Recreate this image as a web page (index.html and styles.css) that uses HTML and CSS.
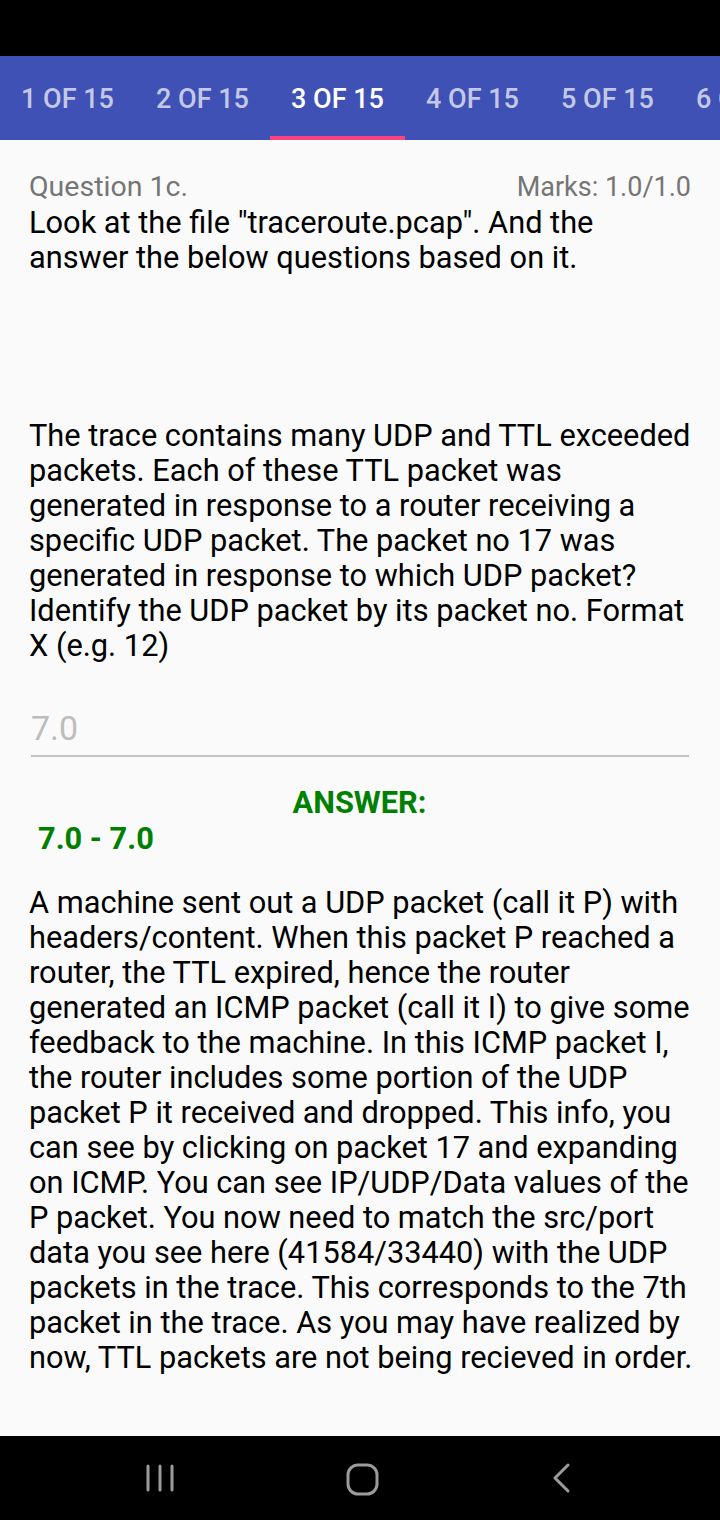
FILE: index.html
```html
<!DOCTYPE html>
<html>
<head>
<meta charset="utf-8">
<link rel="stylesheet" href="styles.css">
</head>
<body>
<div class="screen">
  <div class="statusbar"></div>
  <div class="tabs">
    <div class="tab">1 OF 15</div>
    <div class="tab">2 OF 15</div>
    <div class="tab active">3 OF 15</div>
    <div class="tab">4 OF 15</div>
    <div class="tab">5 OF 15</div>
    <div class="tab">6 OF 15</div>
  </div>
  <div class="content">
    <div class="qhead">
      <span class="qlabel">Question 1c.</span>
      <span class="marks">Marks: 1.0/1.0</span>
    </div>
    <p class="text intro">Look at the file "traceroute.pcap". And the answer the below questions based on it.</p>
    <p class="text question">The trace contains many UDP and TTL exceeded packets. Each of these TTL packet was generated in response to a router receiving a specific UDP packet. The packet no 17 was generated in response to which UDP packet? Identify the UDP packet by its packet no. Format X (e.g. 12)</p>
    <div class="input">7.0</div>
    <div class="answer-title">ANSWER:</div>
    <div class="answer-range">7.0 - 7.0</div>
    <p class="text explain">A machine sent out a UDP packet (call it P) with headers/content. When this packet P reached a router, the TTL expired, hence the router generated an ICMP packet (call it I) to give some feedback to the machine. In this ICMP packet I, the router includes some portion of the UDP packet P it received and dropped. This info, you can see by clicking on packet 17 and expanding on ICMP. You can see IP/UDP/Data values of the P packet. You now need to match the src/port data you see here (41584/33440) with the UDP packets in the trace. This corresponds to the 7th packet in the trace. As you may have realized by now, TTL packets are not being recieved in order.</p>
  </div>
  <div class="navbar">
    <svg class="nav-icon" width="30" height="30" viewBox="0 0 30 30">
      <g stroke="#9b9b9b" stroke-width="3" stroke-linecap="round">
        <line x1="3" y1="3" x2="3" y2="27"/>
        <line x1="15" y1="3" x2="15" y2="27"/>
        <line x1="27" y1="3" x2="27" y2="27"/>
      </g>
    </svg>
    <svg class="nav-icon home" width="34" height="34" viewBox="0 0 34 34">
      <rect x="2" y="2" width="29" height="29" rx="10" ry="10" fill="none" stroke="#9b9b9b" stroke-width="3"/>
    </svg>
    <svg class="nav-icon" width="24" height="30" viewBox="0 0 24 30">
      <polyline points="18,2 5,15 18,28" fill="none" stroke="#9b9b9b" stroke-width="3" stroke-linecap="round" stroke-linejoin="round"/>
    </svg>
  </div>
</div>
</body>
</html>
```

FILE: styles.css
```css
html, body {
  margin: 0;
  padding: 0;
  background: #000;
}
.screen {
  width: 720px;
  height: 1520px;
  display: flex;
  flex-direction: column;
  overflow: hidden;
  font-family: Roboto, "Noto Sans", sans-serif;
}
.statusbar {
  height: 56px;
  background: #000;
  flex: none;
}
.tabs {
  height: 84px;
  background: #3f51b5;
  display: flex;
  flex: none;
  overflow: hidden;
}
.tab {
  flex: none;
  width: 135px;
  box-sizing: border-box;
  display: flex;
  align-items: center;
  justify-content: center;
  font-size: 27px;
  font-weight: 500;
  color: rgba(255,255,255,0.7);
  white-space: nowrap;
  border-bottom: 4px solid transparent;
  padding-top: 6px;
}
.tab.active {
  color: #fff;
  border-bottom-color: #ff4081;
}
.content {
  flex: 1;
  background: #fafafa;
  padding: 0 25px 0 29px;
  color: #000;
}
.qhead {
  display: flex;
  justify-content: space-between;
  align-items: baseline;
  margin-top: 29px;
  margin-right: 4px;
  line-height: 36px;
}
.qlabel {
  font-size: 28.5px;
  color: #757575;
}
.marks {
  font-size: 27px;
  color: #757575;
}
.text {
  margin: 0;
  font-size: 30.75px;
  line-height: 35px;
}
.intro {
  margin-top: 0;
}
.question {
  margin-top: 143px;
}
.input {
  margin: 48px 6px 0 2px;
  font-size: 34px;
  line-height: 35px;
  color: #bdbdbd;
  padding-bottom: 9px;
  border-bottom: 2px solid #c4c4c4;
}
.answer-title {
  margin-top: 30px;
  margin-right: 5px;
  text-align: center;
  font-size: 30.75px;
  font-weight: 700;
  line-height: 32px;
  color: #008000;
}
.answer-range {
  margin-top: 4px;
  padding-left: 9px;
  font-size: 30.75px;
  font-weight: 700;
  line-height: 32px;
  color: #008000;
}
.explain {
  margin-top: 30px;
}
.navbar {
  height: 84px;
  background: #000;
  flex: none;
  display: flex;
  align-items: center;
  justify-content: space-between;
  padding: 0 146px 0 145px;
  box-sizing: border-box;
}
.nav-icon {
  display: block;
}
.home {
  margin-top: 4px;
}
```
